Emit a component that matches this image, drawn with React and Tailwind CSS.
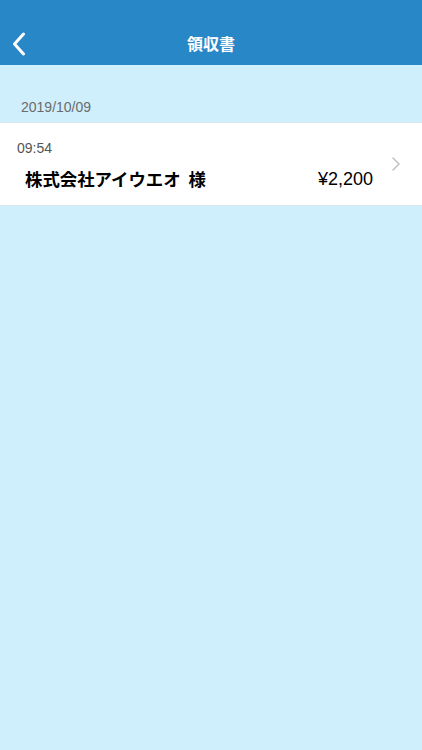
import React from 'react';

const App = () => {
    return (
        <div className="min-h-[750px] w-full bg-[#cfeffc]" style={{ fontFamily: '"Noto Sans CJK JP", "Liberation Sans", sans-serif' }}>
            <header className="h-[65px] bg-[#2888c7] flex items-end">
                <div className="relative w-full h-[44px] flex items-center justify-center">
                    <svg className="absolute left-[12px] top-[11px]" width="14" height="24" viewBox="0 0 14 24" fill="none">
                        <path d="M11.5 2 L2.5 12 L11.5 22" stroke="white" strokeWidth="3" strokeLinecap="round" strokeLinejoin="round" />
                    </svg>
                    <h1 className="text-white text-[16px] font-bold">領収書</h1>
                </div>
            </header>

            <div className="pt-[33px] pb-[6px] px-[21px] text-[14px] text-[#6b6b6b] leading-[18px]" style={{ fontFamily: '"Liberation Sans", sans-serif' }}>
                2019/10/09
            </div>

            <div className="bg-white border-y border-[#d6e6ee] h-[84px] flex items-center">
                <div className="flex-1 pl-[17px] pr-[19px]">
                    <div className="text-[14px] text-[#555] leading-[18px] mt-[1px]" style={{ fontFamily: '"Liberation Sans", sans-serif' }}>09:54</div>
                    <div className="flex items-center justify-between pl-[8px] mt-[11px]">
                        <span className="text-[17.4px] font-bold text-black leading-[22px]">株式会社アイウエオ&nbsp;&nbsp;様</span>
                        <span className="text-[18px] text-black leading-[22px]" style={{ fontFamily: '"Liberation Sans", sans-serif' }}>¥2,200</span>
                    </div>
                </div>
                <svg className="mr-[22px]" width="8" height="14" viewBox="0 0 8 14" fill="none">
                    <path d="M1 1 L7 7 L1 13" stroke="#c4c4c4" strokeWidth="1.6" strokeLinecap="round" strokeLinejoin="round" />
                </svg>
            </div>
        </div>
    );
};

export default App;
